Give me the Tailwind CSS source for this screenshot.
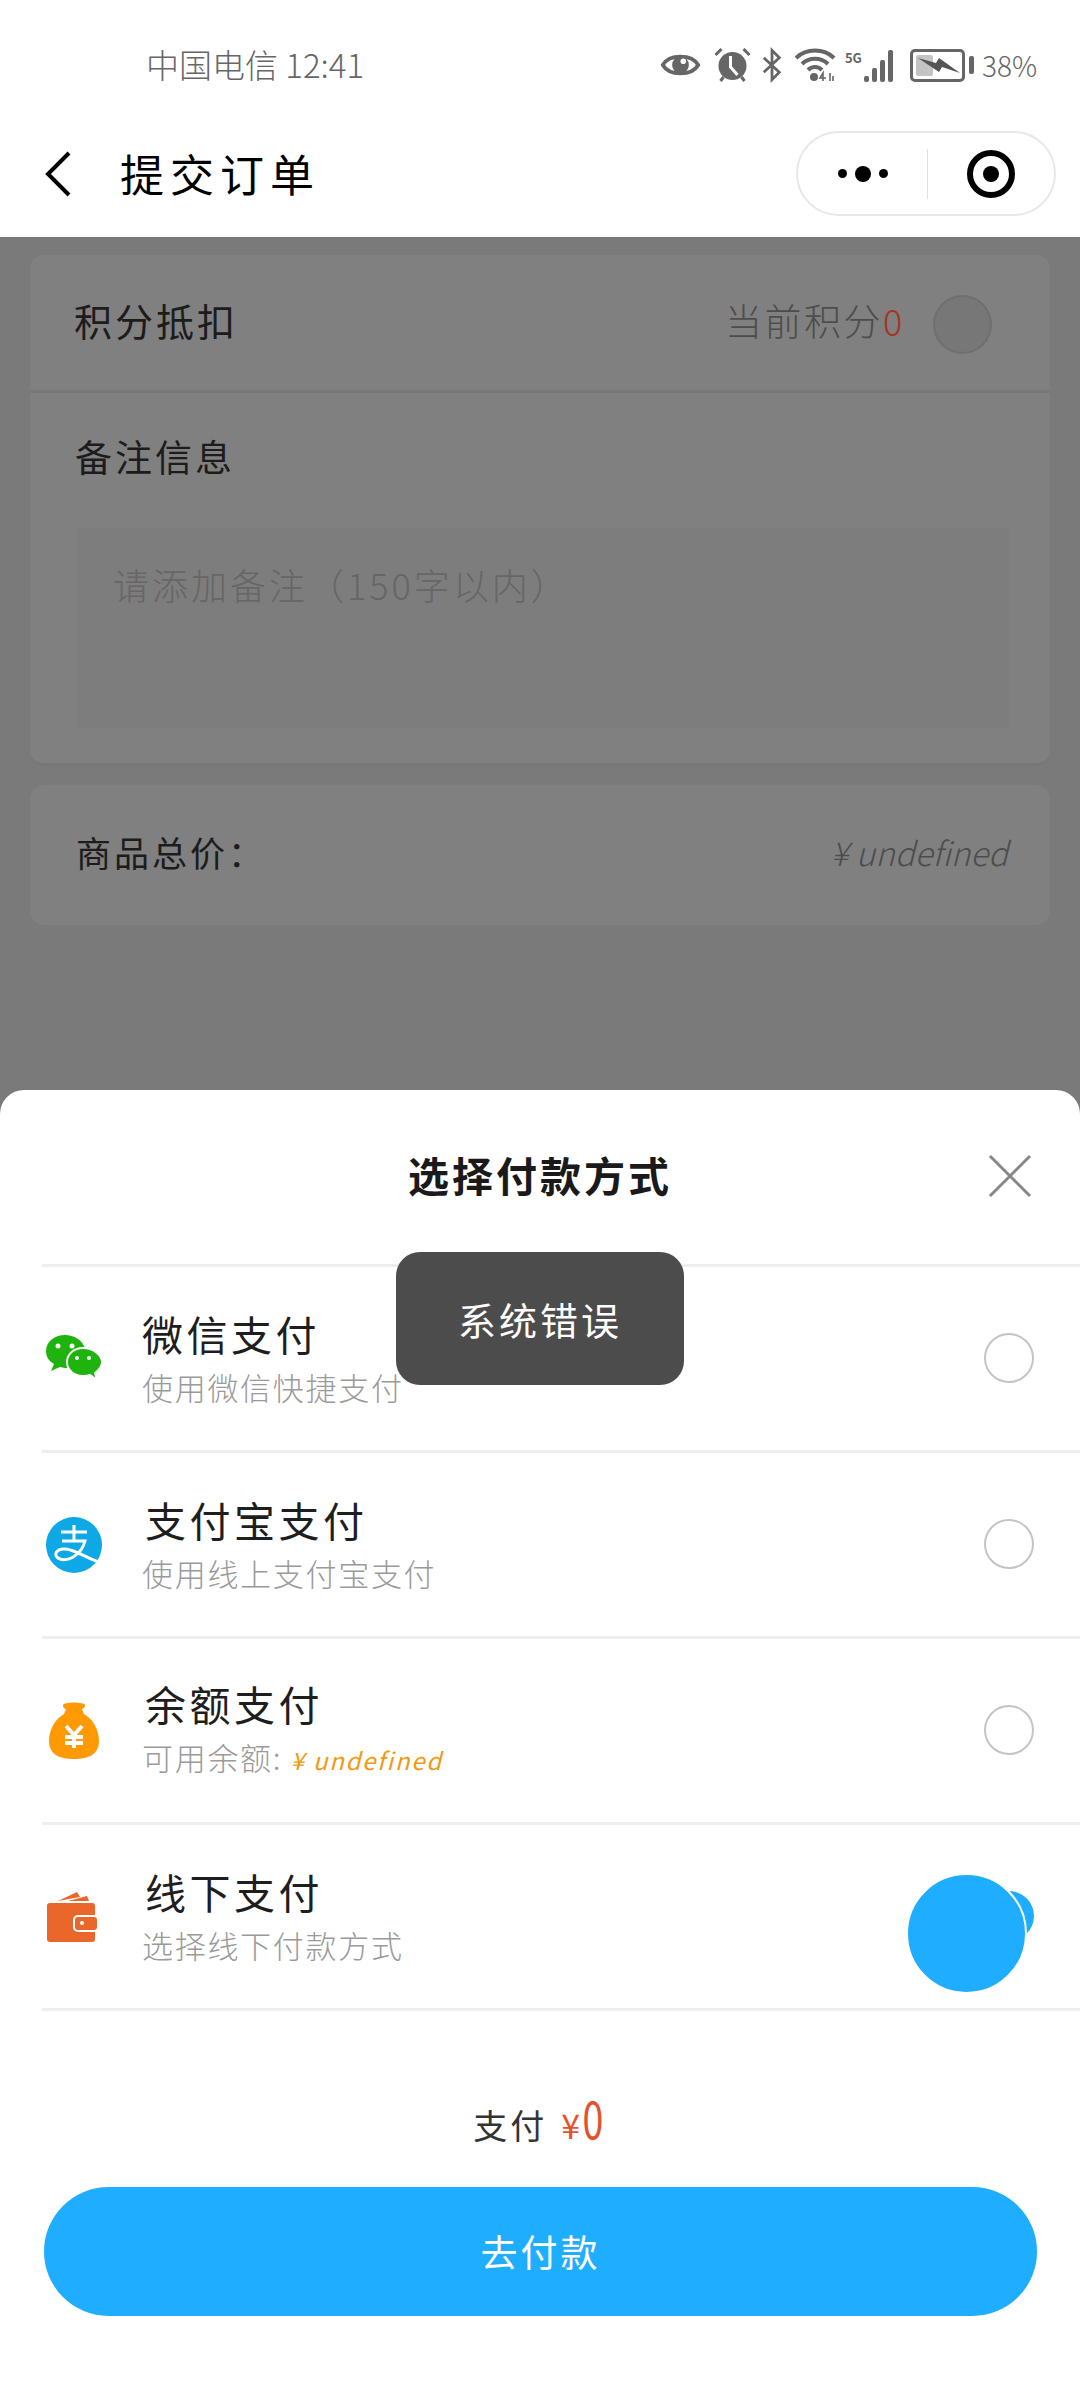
<!DOCTYPE html>
<html lang="zh">
<head>
    <meta charset="UTF-8">
    <meta name="viewport" content="width=device-width, initial-scale=1.0">
    <title>提交订单</title>
    <script src="https://cdn.jsdelivr.net/npm/@tailwindcss/browser@4"></script>
</head>
<body class="relative w-[1080px] h-[2400px] overflow-hidden bg-[#7a7a7a] font-['Noto_Sans_CJK_SC','Noto_Sans',sans-serif] font-light">

    <!-- status bar -->
    <div class="h-[110px] bg-white flex items-center pt-[20px] pl-[146px] pr-[43px] text-[#666666]">
        <span class="text-[33px]">中国电信 12:41</span>
        <div class="ml-auto flex items-center">
            <svg class="w-[41px] h-[28px]" viewBox="0 0 42 30"><path d="M2 15C9 3 33 3 40 15C33 27 9 27 2 15Z" fill="none" stroke="#666" stroke-width="4"/><circle cx="21" cy="15" r="9" fill="#666"/><circle cx="24" cy="11" r="3" fill="#fff"/></svg>
            <svg class="w-[37px] h-[34px] ml-[13px]" viewBox="0 0 36 34"><circle cx="18" cy="18" r="14" fill="#666"/><path d="M16 8V19L23 27" stroke="#fff" stroke-width="3" fill="none"/><path d="M1 7L7 1M35 7L29 1M6 33L9 29M30 33L27 29" stroke="#666" stroke-width="3"/></svg>
            <svg class="w-[22px] h-[36px] ml-[10px]" viewBox="0 0 24 36"><path d="M3 10L20 26L12 34V2L20 10L3 26" fill="none" stroke="#666" stroke-width="3"/></svg>
            <svg class="w-[41px] h-[34px] ml-[12px]" viewBox="0 0 41 34"><path d="M1 10C11 0 29 0 39 10M7 16C14 9 26 9 33 16M13 22C17 18 23 18 27 22" fill="none" stroke="#666" stroke-width="4"/><circle cx="19" cy="29" r="4" fill="#666"/><path d="M28 33V25L25 30H31M35 25V33M38 28V33" fill="none" stroke="#666" stroke-width="1.6"/></svg>
            <div class="flex items-end h-[34px] ml-[9px]">
                <span class="text-[13px] leading-none font-bold self-start mt-[3px] w-[19px]">5G</span>
                <i class="w-[5px] h-[6px] bg-[#666666] rounded-[2px]"></i>
                <i class="w-[5px] h-[14px] bg-[#666666] rounded-[2px] ml-[3px]"></i>
                <i class="w-[5px] h-[22px] bg-[#666666] rounded-[2px] ml-[3px]"></i>
                <i class="w-[5px] h-[32px] bg-[#666666] rounded-[2px] ml-[3px]"></i>
            </div>
            <div class="flex items-center gap-[4px] ml-[17px]">
                <div class="relative w-[55px] h-[33px] border-[3px] border-[#666666] rounded-[5px] p-[3px]">
                    <div class="w-[17px] h-full bg-[#c4c4c4] rounded-[2px]"></div>
                    <svg class="absolute left-[5px] top-[3px] w-[42px] h-[20px]" viewBox="0 0 42 20"><path d="M0 3L18 8L21 3L42 18L24 12L21 17Z" fill="#555"/></svg>
                </div>
                <i class="w-[5px] h-[18px] bg-[#666666] rounded-[2px]"></i>
            </div>
            <span class="text-[28px] ml-[8px] leading-none">38%</span>
        </div>
    </div>

    <!-- nav bar -->
    <div class="h-[127px] bg-white flex items-center pl-[44px] pr-[24px]">
        <svg class="w-[28px] h-[46px]" viewBox="0 0 28 46"><path d="M25 2L4 23L25 44" fill="none" stroke="#000" stroke-width="4"/></svg>
        <span class="ml-[48px] mb-[2px] text-[44px] leading-[56px] tracking-[6px] text-black font-normal">提交订单</span>
        <div class="ml-auto w-[260px] h-[85px] rounded-full border-[2px] border-[#e8e8e8] flex items-center">
            <div class="w-[129px] flex items-center justify-center gap-[8px]">
                <i class="w-[9px] h-[9px] rounded-full bg-black"></i>
                <i class="w-[16px] h-[16px] rounded-full bg-black"></i>
                <i class="w-[9px] h-[9px] rounded-full bg-black"></i>
            </div>
            <div class="w-[1px] h-[50px] bg-[#e0e0e0]"></div>
            <div class="flex-1 flex items-center justify-center">
                <div class="w-[48px] h-[48px] rounded-full border-[6px] border-black flex items-center justify-center">
                    <i class="w-[16px] h-[16px] rounded-full bg-black"></i>
                </div>
            </div>
        </div>
    </div>

    <!-- page behind the dim layer -->
    <div class="px-[30px] pt-[18px] flex flex-col">
        <div class="h-[138px] bg-[#808080] rounded-t-[14px] flex items-center pl-[44px] pr-[58px] border-b-[3px] border-[#777777]">
            <span class="mb-[6px] text-[38px] leading-[50px] tracking-[3px] text-[#1c1c1c] font-normal">积分抵扣</span>
            <span class="ml-auto mb-[6px] text-[37px] leading-[50px] tracking-[2.5px] text-[#4d4d4d]">当前积分</span>
            <span class="mb-[6px] text-[36px] leading-[50px] text-[#a8321e] mr-[30px] w-[20px]">0</span>
            <div class="w-[59px] h-[59px] mt-[3px] rounded-full bg-[#777777] border-[2px] border-[#6f6f6f]"></div>
        </div>
        <div class="h-[373px] bg-[#808080] rounded-b-[14px] border-b-[3px] border-[#777777] px-[45px]">
            <div class="h-[88px] flex items-end text-[37px] leading-[50px] tracking-[3px] text-[#1c1c1c] font-normal">备注信息</div>
            <div class="mt-[47px] ml-[2px] w-[932px] h-[200px] bg-[#7d7d7d] px-[36px] pt-[30px] text-[36px] leading-[52px] tracking-[3px] text-[#666666]">请添加备注（150字以内）</div>
        </div>
        <div class="h-[140px] bg-[#808080] rounded-[14px] flex items-center pl-[46px] pr-[42px] mt-[19px]">
            <span class="mb-[6px] text-[35px] leading-[50px] tracking-[3px] text-[#1c1c1c] font-normal">商品总价：</span>
            <span class="ml-auto mb-[6px] text-[33px] leading-[50px] text-[#4d4d4d] italic">¥ undefined</span>
        </div>
    </div>

    <!-- payment sheet -->
    <div class="absolute left-0 right-0 top-[1090px] bottom-0 bg-white rounded-t-[24px] flex flex-col">
        <div class="h-[174px] relative flex items-center justify-center pb-[6px]">
            <span class="text-[41px] leading-[56px] tracking-[3px] font-bold text-[#1a1a1a]">选择付款方式</span>
            <svg class="absolute left-[988px] top-[64px] w-[44px] h-[44px]" viewBox="0 0 44 44"><path d="M2 2L42 42M42 2L2 42" stroke="#888" stroke-width="3" fill="none"/></svg>
        </div>
        <div class="ml-[42px] border-t-[3px] border-[#eeeeee]">

            <div class="h-[186px] border-b-[3px] border-[#eeeeee] flex items-center">
                <div class="w-[100px] shrink-0 pl-[3px]">
                    <svg class="w-[58px] h-[50px]" viewBox="0 0 58 50">
                        <path d="M20 1C9 1 1 8 1 17C1 23 4 27 9 30L6 37L15 33C18 34 22 34 24 34L40 14C37 6 29 1 20 1Z" fill="#1fb30e"/>
                        <circle cx="13" cy="12" r="2.5" fill="#fff"/><circle cx="27" cy="12" r="2.5" fill="#fff"/>
                        <path d="M38 14C28 14 22 21 22 28C22 36 29 42 38 42C41 42 43 42 45 41L52 46L50 39C54 36 57 32 57 28C57 21 48 14 38 14Z" fill="#1fb30e" stroke="#fff" stroke-width="2"/>
                        <circle cx="32" cy="24" r="2" fill="#fff"/><circle cx="44" cy="24" r="2" fill="#fff"/>
                    </svg>
                </div>
                <div class="flex flex-col">
                    <div class="text-[41px] leading-[44px] mb-[12px] tracking-[3.5px] text-[#1e1e1e] font-normal">微信支付</div>
                    <div class="text-[31px] leading-[40px] tracking-[1.7px] text-[#9a9a9a]">使用微信快捷支付</div>
                </div>
                <div class="ml-auto mr-[46px] -mt-[2px] w-[50px] h-[50px] rounded-full border-[2px] border-[#c4c4c4]"></div>
            </div>

            <div class="h-[186px] border-b-[3px] border-[#eeeeee] flex items-center">
                <div class="w-[100px] shrink-0 pl-[4px]">
                    <svg class="w-[56px] h-[56px]" viewBox="0 0 56 56">
                        <circle cx="28" cy="28" r="28" fill="#0ea8e6"/>
                        <path d="M15 15H41M28 8V24M16 24H39C36 36 24 45 14 42C6 39 10 31 20 32C30 33 44 43 54 45" fill="none" stroke="#fff" stroke-width="3"/>
                    </svg>
                </div>
                <div class="flex flex-col">
                    <div class="text-[41px] leading-[44px] mb-[12px] tracking-[3.5px] text-[#1e1e1e] font-normal pl-[3px]">支付宝支付</div>
                    <div class="text-[31px] leading-[40px] tracking-[1.7px] text-[#9a9a9a]">使用线上支付宝支付</div>
                </div>
                <div class="ml-auto mr-[46px] -mt-[2px] w-[50px] h-[50px] rounded-full border-[2px] border-[#c4c4c4]"></div>
            </div>

            <div class="h-[186px] border-b-[3px] border-[#eeeeee] flex items-center">
                <div class="w-[100px] shrink-0 pl-[6px]">
                    <svg class="w-[52px] h-[58px]" viewBox="0 0 50 58">
                        <path d="M15 2C20 0 30 0 35 2C37 3 36 6 33 7L35 12C44 17 50 28 50 39C50 52 40 57 25 57C10 57 0 52 0 39C0 28 6 17 15 12L17 7C14 6 13 3 15 2Z" fill="#ff9a05"/>
                        <path d="M17 24L25 33L33 24M25 33V46M16 35H34M16 41H34" fill="none" stroke="#fff" stroke-width="4"/>
                    </svg>
                </div>
                <div class="flex flex-col">
                    <div class="text-[41px] leading-[44px] mb-[12px] tracking-[3.5px] text-[#1e1e1e] font-normal pl-[3px]">余额支付</div>
                    <div class="text-[31px] leading-[40px] tracking-[1.7px] text-[#9a9a9a]">可用余额: <span class="text-[24px] text-[#ef9b12] italic font-normal">¥ undefined</span></div>
                </div>
                <div class="ml-auto mr-[46px] -mt-[2px] w-[50px] h-[50px] rounded-full border-[2px] border-[#c4c4c4]"></div>
            </div>

            <div class="h-[186px] border-b-[3px] border-[#eeeeee] flex items-center">
                <div class="w-[100px] shrink-0 pl-[5px]">
                    <svg class="w-[52px] h-[50px]" viewBox="0 0 52 50">
                        <path d="M11 9L30 0L33 5ZM21 9L40 4L42 9Z" fill="#e9672a"/>
                        <rect x="0" y="11" width="48" height="39" rx="3" fill="#e9672a"/>
                        <rect x="27" y="24" width="24" height="15" rx="4" fill="#e9672a" stroke="#fff" stroke-width="2"/>
                        <circle cx="35" cy="31" r="2" fill="#fff"/>
                    </svg>
                </div>
                <div class="flex flex-col">
                    <div class="text-[41px] leading-[44px] mb-[12px] tracking-[3.5px] text-[#1e1e1e] font-normal pl-[3px]">线下支付</div>
                    <div class="text-[31px] leading-[40px] tracking-[1.7px] text-[#9a9a9a]">选择线下付款方式</div>
                </div>
                <div class="ml-auto mr-[46px] -mt-[2px] w-[50px] h-[50px] rounded-full bg-[#1fadff]"></div>
            </div>
        </div>

        <div class="mt-[69px] flex items-baseline justify-center gap-[14px]">
            <span class="text-[34px] tracking-[3px] text-[#333333] font-normal">支付</span>
            <span class="text-[34px] text-[#e5512d] font-normal">¥<span class="inline-block text-[50px] scale-x-75 -ml-[1px]">0</span></span>
        </div>
        <div class="ml-[44px] mr-[43px] mt-[32px] h-[129px] rounded-full bg-[#1fadff] flex items-center justify-center text-[37px] tracking-[3px] text-white font-normal">去付款</div>
    </div>

    <!-- floating drag ball over the last radio -->
    <div class="absolute left-[906px] top-[1873px] w-[117px] h-[117px] box-content rounded-full bg-[#1fadff] border-[2px] border-white"></div>

    <!-- toast -->
    <div class="absolute left-[396px] top-[1252px] w-[288px] h-[133px] rounded-[24px] bg-[#4c4c4c] flex items-center justify-center text-[38px] tracking-[3px] text-white font-normal">系统错误</div>
</body>
</html>
